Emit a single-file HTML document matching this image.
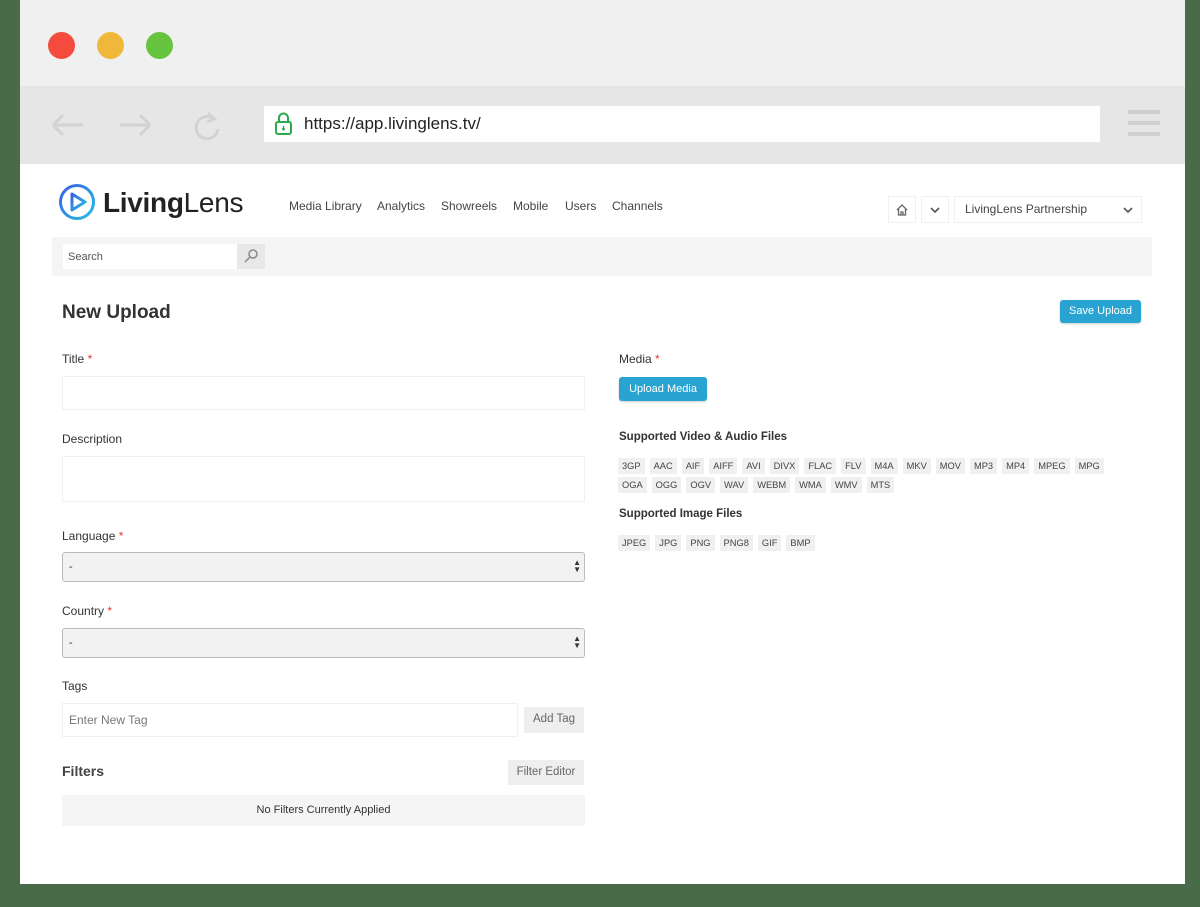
<!DOCTYPE html>
<html><head><meta charset="utf-8"><style>
*{box-sizing:border-box;margin:0;padding:0}
body{width:1200px;height:907px;background:#4a6b48;font-family:"Liberation Sans",sans-serif;position:relative;overflow:hidden;color:#333}
.win{position:absolute;left:20px;top:0;width:1165px;height:884px;background:#fff}
.title{position:absolute;left:0;top:0;width:100%;height:86px;background:#f0f0f0}
.dot{position:absolute;top:32px;width:27px;height:27px;border-radius:50%}
.tool{position:absolute;left:0;top:86px;width:100%;height:78px;background:#e6e6e6}
.addr{position:absolute;left:244px;top:20px;width:836px;height:36px;background:#fff}
.abs{position:absolute}
.nav{position:absolute;top:199px;font-size:12px;color:#444}
.lbl{position:absolute;font-size:12px;color:#333}
.req{color:#e03a3a}
.inp{position:absolute;border:1px solid #f0f0f0;background:#fff}
.sel{position:absolute;left:42px;width:523px;height:30px;border:1px solid #bbb;border-radius:3px;background:#f2f2f2;font-size:11px;padding:8px 6px}
.btnb{position:absolute;background:#29a3d2;color:#fff;font-size:11px;border-radius:3px;text-align:center;box-shadow:0 1px 2px rgba(0,0,0,.2)}
.btng{position:absolute;background:#eeeeee;color:#666;font-size:11.5px;text-align:center}
.chips{position:absolute;left:598px;display:flex;gap:5px;font-size:9.3px;color:#444}
.chips span{background:#f0f0f0;padding:4px 4px;height:16px;line-height:9px}
</style></head><body>
<div class="win">
 <div class="title">
  <div class="dot" style="left:28px;background:#f44b3e"></div>
  <div class="dot" style="left:77px;background:#f0b83a"></div>
  <div class="dot" style="left:126px;background:#67c43f"></div>
 </div>
 <div class="tool">
  <svg class="abs" style="left:30px;top:24px" width="170" height="40" fill="none" stroke="#d2d2d2" stroke-width="3">
   <path d="M3 15H33M3 15L13 5M3 15L13 25"/>
   <path d="M70 15H100M100 15L90 5M100 15L90 25"/>
   <path d="M165 10A11 11 0 1 0 168 19"/>
   <path d="M158 3l7 6-8 3" stroke-width="2.5"/>
  </svg>
  <div class="addr">
   <svg class="abs" style="left:10px;top:6px" width="20" height="24" fill="none" stroke="#2da84a" stroke-width="2"><rect x="2" y="10" width="15" height="12" rx="2"/><path d="M5 10V6a4.5 4.5 0 0 1 9 0v4"/><path d="M9.5 14v4M8 16.5l1.5 1.5 1.5-1.5" stroke-width="1.3"/></svg>
   <div class="abs" style="left:40px;top:8px;font-size:17px;color:#222">https://app.livinglens.tv/</div>
  </div>
  <div class="abs" style="left:1108px;top:24px;width:32px;height:4px;background:#cfcfcf"></div>
  <div class="abs" style="left:1108px;top:35px;width:32px;height:4px;background:#cfcfcf"></div>
  <div class="abs" style="left:1108px;top:46px;width:32px;height:4px;background:#cfcfcf"></div>
 </div>
 <svg class="abs" style="left:38px;top:183px" width="38" height="38"><defs><linearGradient id="g" x1="0" y1="0" x2="1" y2="1"><stop offset="0" stop-color="#3b5fe0"/><stop offset="1" stop-color="#27c0e8"/></linearGradient></defs><circle cx="19" cy="19" r="16.5" fill="none" stroke="url(#g)" stroke-width="3"/><path d="M14 11L27 19L14 27Z" fill="none" stroke="url(#g)" stroke-width="3" stroke-linejoin="round"/></svg>
 <div class="abs" style="left:83px;top:187px;font-size:28px;color:#222;letter-spacing:-0.3px"><b>Living</b>Lens</div>
 <div class="nav" style="left:269px">Media Library</div>
 <div class="nav" style="left:357px">Analytics</div>
 <div class="nav" style="left:421px">Showreels</div>
 <div class="nav" style="left:493px">Mobile</div>
 <div class="nav" style="left:545px">Users</div>
 <div class="nav" style="left:592px">Channels</div>
 <div class="inp" style="left:868px;top:196px;width:28px;height:27px"></div>
 <svg class="abs" style="left:875px;top:203px" width="14" height="14" fill="none" stroke="#666" stroke-width="1.3"><path d="M2 7L7 2L12 7M3.5 6V12H10.5V6M6 12V9H8V12"/></svg>
 <div class="inp" style="left:901px;top:196px;width:28px;height:27px"></div>
 <svg class="abs" style="left:910px;top:206px" width="10" height="8" fill="none" stroke="#555" stroke-width="1.6"><path d="M1 2L5 6L9 2"/></svg>
 <div class="inp" style="left:934px;top:196px;width:188px;height:27px"></div>
 <div class="abs" style="left:945px;top:202px;font-size:12px;color:#444">LivingLens Partnership</div>
 <svg class="abs" style="left:1103px;top:206px" width="10" height="8" fill="none" stroke="#555" stroke-width="1.6"><path d="M1 2L5 6L9 2"/></svg>
 <div class="abs" style="left:32px;top:237px;width:1100px;height:39px;background:#f5f5f5"></div>
 <div class="abs" style="left:43px;top:244px;width:174px;height:25px;background:#fff;font-size:11px;color:#555;padding:7px 5px">Search</div>
 <div class="abs" style="left:217px;top:244px;width:28px;height:25px;background:#e8e8e8"></div>
 <svg class="abs" style="left:223px;top:248px" width="16" height="16" fill="none" stroke="#888" stroke-width="1.5"><circle cx="10" cy="6" r="4"/><path d="M7 9L2 14"/></svg>
 <div class="abs" style="left:42px;top:302px;font-size:19px;font-weight:bold;color:#333">New Upload</div>
 <div class="btnb" style="left:1040px;top:300px;width:81px;height:23px;padding-top:5px">Save Upload</div>
 <div class="lbl" style="left:42px;top:352px">Title <span class="req">*</span></div>
 <div class="inp" style="left:42px;top:376px;width:523px;height:34px"></div>
 <div class="lbl" style="left:42px;top:432px">Description</div>
 <div class="inp" style="left:42px;top:456px;width:523px;height:46px"></div>
 <div class="lbl" style="left:42px;top:529px">Language <span class="req">*</span></div>
 <div class="sel" style="top:552px">-<span style="position:absolute;right:3px;top:6px;font-size:8px;line-height:7px">▲<br>▼</span></div>
 <div class="lbl" style="left:42px;top:604px">Country <span class="req">*</span></div>
 <div class="sel" style="top:628px">-<span style="position:absolute;right:3px;top:6px;font-size:8px;line-height:7px">▲<br>▼</span></div>
 <div class="lbl" style="left:42px;top:679px">Tags</div>
 <div class="inp" style="left:42px;top:703px;width:456px;height:34px;font-size:12px;color:#777;padding:9px 6px">Enter New Tag</div>
 <div class="btng" style="left:504px;top:707px;width:60px;height:26px;padding-top:6px">Add Tag</div>
 <div class="abs" style="left:42px;top:763px;font-size:14px;font-weight:bold;color:#444">Filters</div>
 <div class="btng" style="left:488px;top:760px;width:76px;height:25px;padding-top:6px">Filter Editor</div>
 <div class="abs" style="left:42px;top:795px;width:523px;height:31px;background:#f5f5f5;font-size:11px;color:#333;text-align:center;padding-top:9px">No Filters Currently Applied</div>
 <div class="lbl" style="left:599px;top:352px">Media <span class="req">*</span></div>
 <div class="btnb" style="left:599px;top:377px;width:88px;height:24px;padding-top:6px">Upload Media</div>
 <div class="abs" style="left:599px;top:431px;font-size:11.5px;font-weight:bold;color:#333">Supported Video &amp; Audio Files</div>
 <div class="chips" style="top:458px"><span>3GP</span><span>AAC</span><span>AIF</span><span>AIFF</span><span>AVI</span><span>DIVX</span><span>FLAC</span><span>FLV</span><span>M4A</span><span>MKV</span><span>MOV</span><span>MP3</span><span>MP4</span><span>MPEG</span><span>MPG</span></div>
 <div class="chips" style="top:477px"><span>OGA</span><span>OGG</span><span>OGV</span><span>WAV</span><span>WEBM</span><span>WMA</span><span>WMV</span><span>MTS</span></div>
 <div class="abs" style="left:599px;top:508px;font-size:11.5px;font-weight:bold;color:#333">Supported Image Files</div>
 <div class="chips" style="top:535px"><span>JPEG</span><span>JPG</span><span>PNG</span><span>PNG8</span><span>GIF</span><span>BMP</span></div>
</div>
</body></html>
